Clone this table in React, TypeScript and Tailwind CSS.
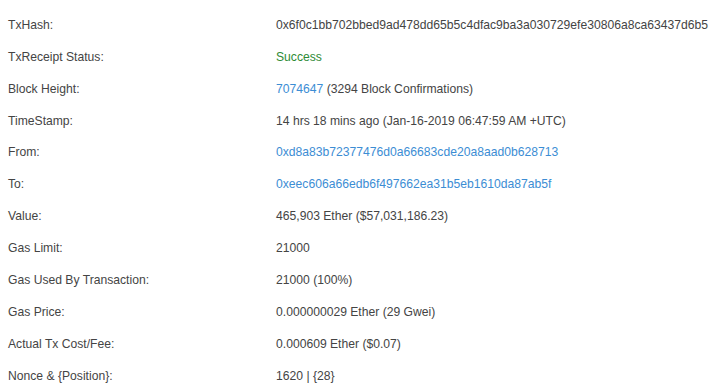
import React from "react";

type Row = { label: string; value: React.ReactNode };

const link = "text-[#3c8dd4]";

const rows: Row[] = [
  { label: "TxHash:", value: "0x6f0c1bb702bbed9ad478dd65b5c4dfac9ba3a030729efe30806a8ca63437d6b5" },
  { label: "TxReceipt Status:", value: <span className="text-[#2e8b36]">Success</span> },
  {
    label: "Block Height:",
    value: (
      <>
        <span className={link}>7074647</span> (3294 Block Confirmations)
      </>
    ),
  },
  { label: "TimeStamp:", value: "14 hrs 18 mins ago (Jan-16-2019 06:47:59 AM +UTC)" },
  { label: "From:", value: <span className={link}>0xd8a83b72377476d0a66683cde20a8aad0b628713</span> },
  { label: "To:", value: <span className={link}>0xeec606a66edb6f497662ea31b5eb1610da87ab5f</span> },
  { label: "Value:", value: "465,903 Ether ($57,031,186.23)" },
  { label: "Gas Limit:", value: "21000" },
  { label: "Gas Used By Transaction:", value: "21000 (100%)" },
  { label: "Gas Price:", value: "0.000000029 Ether (29 Gwei)" },
  { label: "Actual Tx Cost/Fee:", value: "0.000609 Ether ($0.07)" },
  { label: "Nonce & {Position}:", value: "1620 | {28}" },
];

export default function App() {
  return (
    <div
      className="w-[720px] h-[390px] bg-white flex flex-col overflow-hidden text-[12.15px] text-[#444]"
      style={{ fontFamily: '"Liberation Sans", Arial, sans-serif' }}
    >
      <div className="flex flex-col pt-[9px] flex-1">
        {rows.map((r) => (
          <div key={r.label} className="flex items-center h-[31.9px]">
            <div className="w-[276px] pl-[8px] shrink-0">{r.label}</div>
            <div className="whitespace-nowrap">{r.value}</div>
          </div>
        ))}
      </div>
      <div className="h-[2px] bg-[#222] shrink-0" />
    </div>
  );
}
